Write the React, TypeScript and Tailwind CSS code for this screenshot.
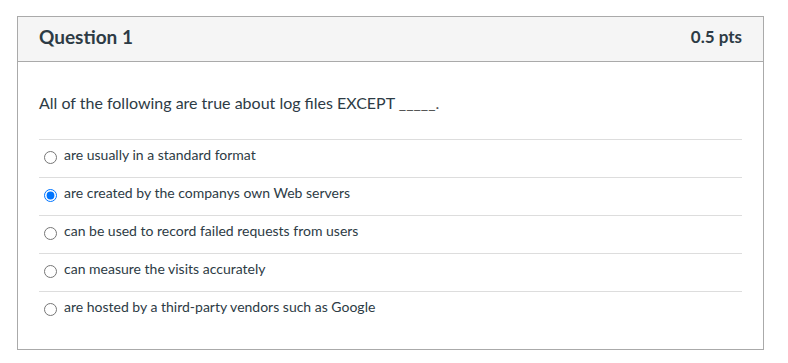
import React from 'react';

const options = [
  'are usually in a standard format',
  'are created by the companys own Web servers',
  'can be used to record failed requests from users',
  'can measure the visits accurately',
  'are hosted by a third-party vendors such as Google',
];

export default function App() {
  return (
    <div className="min-h-[363px] bg-white pt-[16px] pl-[17px]" style={{ fontFamily: 'Lato, "Open Sans", sans-serif' }}>
      <div className="w-[747px] border border-[#aaaaaa] text-[#2d3b45]">
        <div className="flex h-[45px] items-center justify-between border-b border-[#aaaaaa] bg-[#f5f5f5] px-[21px] pb-[4px]">
          <span className="text-[19px] font-bold">Question 1</span>
          <span className="text-[17px] font-bold">0.5 pts</span>
        </div>
        <div className="px-[21px] pt-[31px] pb-[20px]">
          <div className="mb-[26px] text-[16px] leading-[20px]">
            All of the following are true about log files EXCEPT <span className="text-[#555555]">_____.</span>
          </div>
          {options.map((opt, i) => (
            <label key={i} className="flex h-[38px] items-center border-t border-[#dddddd] pb-[2px] text-[14px]">
              <input
                type="radio"
                name="q1"
                defaultChecked={i === 1}
                className="my-0 ml-[5px] mr-[7px] h-[13px] w-[13px]"
              />
              <span className="pb-[6px]">{opt}</span>
            </label>
          ))}
        </div>
      </div>
    </div>
  );
}
